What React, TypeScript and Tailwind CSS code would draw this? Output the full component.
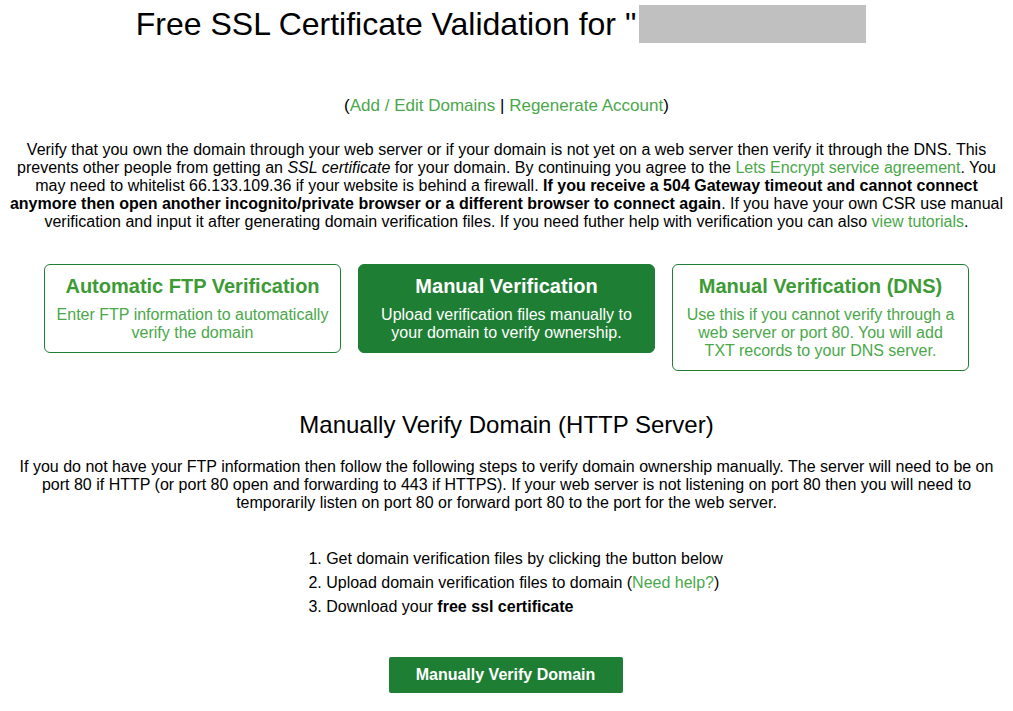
export default function App() {
  return (
    <div className="min-h-screen bg-white text-black font-['Liberation_Sans',Arial,sans-serif] px-[8px]">
      {/* Title */}
      <div className="flex items-center justify-center pt-[5px] pr-[11px]">
        <h1 className="text-[32px] leading-[37px] font-normal">Free SSL Certificate Validation for "</h1>
        <span className="inline-block w-[227px] h-[38px] bg-[#c0c0c0] ml-[3px]"></span>
      </div>

      <p className="text-center text-[17px] mt-[50px]">
        (<a className="text-[#4aa84a]" href="#">Add / Edit Domains</a> | <a className="text-[#4aa84a]" href="#">Regenerate Account</a>)
      </p>

      <p className="text-center text-[16px] leading-[18px] mt-[22px]">
        Verify that you own the domain through your web server or if your domain is not yet on a web server then verify it through the DNS. This prevents other people from getting an <i>SSL certificate</i> for your domain. By continuing you agree to the <a className="text-[#4aa84a]" href="#">Lets Encrypt service agreement</a>. You may need to whitelist 66.133.109.36 if your website is behind a firewall. <b>If you receive a 504 Gateway timeout and cannot connect anymore then open another incognito/private browser or a different browser to connect again</b>. If you have your own CSR use manual verification and input it after generating domain verification files. If you need futher help with verification you can also <a className="text-[#4aa84a]" href="#">view tutorials</a>.
      </p>

      {/* Verification options */}
      <div className="flex justify-center items-start gap-[17px] mt-[33px]">
        <div className="w-[297px] border border-[#1e7e34] rounded-[6px] px-[10px] pt-[10px] pb-[10px] text-center">
          <div className="text-[20px] font-bold text-[#3d9b35] leading-[23px]">Automatic FTP Verification</div>
          <div className="text-[16px] leading-[18px] text-[#4aa84a] mt-[8px]">Enter FTP information to automatically verify the domain</div>
        </div>
        <div className="w-[297px] bg-[#1e7e34] border border-[#1e7e34] rounded-[6px] px-[10px] pt-[10px] pb-[10px] text-center text-white">
          <div className="text-[20px] font-bold leading-[23px]">Manual Verification</div>
          <div className="text-[16px] leading-[18px] mt-[8px]">Upload verification files manually to your domain to verify ownership.</div>
        </div>
        <div className="w-[297px] border border-[#1e7e34] rounded-[6px] px-[10px] pt-[10px] pb-[10px] text-center">
          <div className="text-[20px] font-bold text-[#3d9b35] leading-[23px]">Manual Verification (DNS)</div>
          <div className="text-[16px] leading-[18px] text-[#4aa84a] mt-[8px]">Use this if you cannot verify through a web server or port 80. You will add TXT records to your DNS server.</div>
        </div>
      </div>

      <h2 className="text-center text-[24px] leading-[28px] font-normal mt-[40px]">Manually Verify Domain (HTTP Server)</h2>

      <p className="text-center text-[16px] leading-[18px] mt-[19px]">
        If you do not have your FTP information then follow the following steps to verify domain ownership manually. The server will need to be on port 80 if HTTP (or port 80 open and forwarding to 443 if HTTPS). If your web server is not listening on port 80 then you will need to temporarily listen on port 80 or forward port 80 to the port for the web server.
      </p>

      <div className="flex justify-center mt-[35px]">
        <ol className="text-[16px] leading-[24px] list-decimal pl-[36px]">
          <li>Get domain verification files by clicking the button below</li>
          <li>Upload domain verification files to domain (<a className="text-[#4aa84a]" href="#">Need help?</a>)</li>
          <li>Download your <b>free ssl certificate</b></li>
        </ol>
      </div>

      <div className="flex justify-center mt-[38px]">
        <button className="w-[234px] h-[36px] bg-[#1e7e34] text-white font-bold text-[16px] rounded-[2px] mr-[2px]">Manually Verify Domain</button>
      </div>
    </div>
  )
}
